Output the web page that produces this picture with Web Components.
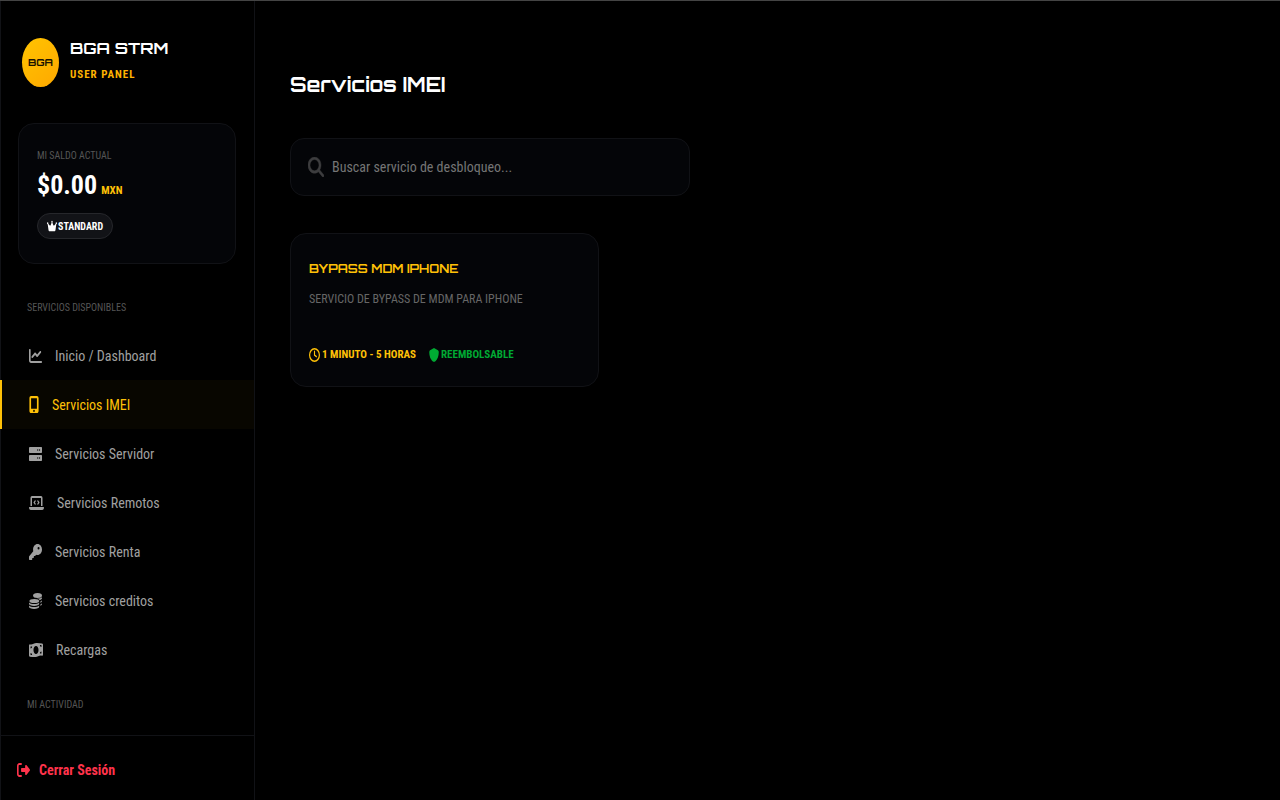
<!DOCTYPE html>
<html lang="es">
<head>
<meta charset="utf-8">
<meta name="viewport" content="width=device-width, initial-scale=1">
<title>BGA STRM - Servicios IMEI</title>
<style>
:root {
  --gold: #ffc107;
  --muted: #555;
  --text: #a0a0a0;
  --line: #111216;
  --panel: #040508;
  --body: "Roboto Condensed", Roboto, sans-serif;
  --display: Orbitron, Roboto, sans-serif;
}
html, body { margin: 0; background: #000; }
body { color: #fff; font-family: var(--body); }
</style>
</head>
<body>
<bga-app>
  <bga-sidebar slot="side">
    <bga-brand slot="brand"></bga-brand>
    <bga-balance slot="balance" amount="$0.00" currency="MXN" level="STANDARD"></bga-balance>
    <bga-section label="Servicios disponibles">
      <bga-nav-item icon="chart">Inicio / Dashboard</bga-nav-item>
      <bga-nav-item icon="mobile" active>Servicios IMEI</bga-nav-item>
      <bga-nav-item icon="server">Servicios Servidor</bga-nav-item>
      <bga-nav-item icon="laptop">Servicios Remotos</bga-nav-item>
      <bga-nav-item icon="key">Servicios Renta</bga-nav-item>
      <bga-nav-item icon="coins">Servicios creditos</bga-nav-item>
      <bga-nav-item icon="bill">Recargas</bga-nav-item>
    </bga-section>
    <bga-section label="Mi actividad"></bga-section>
    <bga-logout slot="foot">Cerrar Sesión</bga-logout>
  </bga-sidebar>
  <bga-title>Servicios IMEI</bga-title>
  <bga-search></bga-search>
  <bga-grid>
    <bga-service time="1 MINUTO - 5 HORAS" refund="REEMBOLSABLE">
      BYPASS MDM IPHONE
      <span slot="info">SERVICIO DE BYPASS DE MDM PARA IPHONE</span>
    </bga-service>
  </bga-grid>
</bga-app>
<script>
/* name: [viewBox width, drawn width, drawn height, markup] */
const ICONS = {
  chart: [512, 13, 16, '<path d="M64 64c0-17.7-14.3-32-32-32S0 46.3 0 64V400c0 44.2 35.8 80 80 80H480c17.7 0 32-14.3 32-32s-14.3-32-32-32H80c-8.8 0-16-7.2-16-16V64zm406.6 86.6c12.5-12.5 12.5-32.8 0-45.3s-32.8-12.5-45.3 0L320 210.7l-57.4-57.4c-12.5-12.5-32.8-12.5-45.3 0l-112 112c-12.5 12.5-12.5 32.8 0 45.3s32.8 12.5 45.3 0L240 221.3l57.4 57.4c12.5 12.5 32.8 12.5 45.3 0l128-128z"/>'],
  mobile: [384, 10, 17, '<path fill-rule="evenodd" d="M16 64C16 28.7 44.7 0 80 0H304c35.3 0 64 28.7 64 64V448c0 35.3-28.7 64-64 64H80c-35.3 0-64-28.7-64-64V64zM224 448a32 32 0 1 0 -64 0 32 32 0 1 0 64 0zM304 64H80V384H304V64z"/>'],
  server: [512, 13, 16, '<path fill-rule="evenodd" d="M32 32C14 32 0 46 0 64v128c0 18 14 32 32 32H480c18 0 32-14 32-32V64c0-18-14-32-32-32H32zm312 72a24 24 0 1 1 0 48 24 24 0 1 1 0-48zm48 24a24 24 0 1 1 48 0 24 24 0 1 1 -48 0zM32 288c-18 0-32 14-32 32v128c0 18 14 32 32 32H480c18 0 32-14 32-32V320c0-18-14-32-32-32H32zm312 72a24 24 0 1 1 0 48 24 24 0 1 1 0-48zm48 24a24 24 0 1 1 48 0 24 24 0 1 1 -48 0z"/>'],
  laptop: [640, 15, 16, '<path d="M64 96c0-35.3 28.7-64 64-64H512c35.3 0 64 28.7 64 64V352H512V96H128V352H64V96zM0 403.2C0 392.6 8.6 384 19.2 384H620.8c10.6 0 19.2 8.6 19.2 19.2c0 42.4-34.4 76.8-76.8 76.8H76.8C34.4 480 0 445.6 0 403.2zM281 209l-31 31 31 31c9.4 9.4 9.4 24.6 0 33.9s-24.6 9.4-33.9 0l-48-48c-9.4-9.4-9.4-24.6 0-33.9l48-48c9.4-9.4 24.6-9.4 33.9 0s9.4 24.6 0 33.9zM393 175l48 48c9.4 9.4 9.4 24.6 0 33.9l-48 48c-9.4 9.4-24.6 9.4-33.9 0s-9.4-24.6 0-33.9l31-31-31-31c-9.4-9.4-9.4-24.6 0-33.9s24.6-9.4 33.9 0z"/>'],
  key: [512, 13, 16, '<path fill-rule="evenodd" d="M336 352c97.2 0 176-78.8 176-176S433.2 0 336 0S160 78.8 160 176c0 18.7 2.9 36.8 8.3 53.7L7 391c-4.5 4.5-7 10.6-7 17v80c0 13.3 10.7 24 24 24h80c13.3 0 24-10.7 24-24V448h40c13.3 0 24-10.7 24-24V384h40c6.4 0 12.5-2.5 17-7l33.3-33.3c16.9 5.4 35 8.3 53.7 8.3zM376 96a40 40 0 1 1 0 80 40 40 0 1 1 0-80z"/>'],
  coins: [512, 13, 16, '<ellipse cx="336" cy="80" rx="176" ry="80"/><path d="M512 136v24c0 28-38 52-92 68-20-28-62-46-118-54 90 6 178-12 210-38zM512 232v24c0 24-26 44-66 58v-46c28-8 52-20 66-36zM512 328v24c0 24-26 44-66 58v-46c28-8 52-20 66-36z"/><ellipse cx="208" cy="256" rx="192" ry="64"/><path d="M0 300c34 36 118 52 200 52s166-16 200-52v44c0 42-90 72-200 72S0 386 0 344zM0 396c34 36 118 52 200 52s166-16 200-52v44c0 42-90 72-200 72S0 482 0 440z"/>'],
  bill: [576, 14, 16, '<path fill-rule="evenodd" d="M0 112c0-20 12-36 32-42 90 30 170-34 270-38 80-4 150 10 240 12 20 4 34 20 34 38v316c0 26-20 44-46 40-90-26-170 36-260 40-80 4-160-4-236-10-20-4-34-20-34-40zM288 128c-62 0-104 58-104 128s42 128 104 128 104-58 104-128-42-128-104-128zM64 352v64h64c0-36-28-64-64-64zM64 144v64c36 0 64-28 64-64zM512 304c-36 0-64 28-64 64h64zM448 96c0 36 28 64 64 64V96z"/>'],
  logout: [512, 13, 16, '<path d="M377.9 105.9L500.7 228.7c7.2 7.2 11.3 17.1 11.3 27.3s-4.1 20.1-11.3 27.3L377.9 406.1c-6.4 6.4-15 9.9-24 9.9c-18.7 0-33.9-15.2-33.9-33.9V320H192c-17.7 0-32-14.3-32-32V224c0-17.7 14.3-32 32-32H320V129.9c0-18.7 15.2-33.9 33.9-33.9c9 0 17.6 3.6 24 9.9zM160 96H96c-17.7 0-32 14.3-32 32V384c0 17.7 14.3 32 32 32h64c17.7 0 32 14.3 32 32s-14.3 32-32 32H96c-53 0-96-43-96-96V128C0 75 43 32 96 32h64c17.7 0 32 14.3 32 32s-14.3 32-32 32z"/>'],
  crown: [576, 10, 12, '<path d="M309 106c12-7 19-19 19-34a40 40 0 1 0-80 0c0 15 7 27 19 34l-57 114c-9 18-32 24-49 11L72 160c5-7 8-15 8-24a40 40 0 1 0-39 40l46 251c5 31 32 53 63 53h276c31 0 58-22 63-53l46-251a40 40 0 1 0-39-40c0 9 3 17 8 24l-89 71c-16 13-39 7-49-11z"/>'],
  search: [512, 16, 20, '<path fill-rule="evenodd" d="M416 208c0 45.9-14.9 88.3-40 122.7L502.6 457.4c12.5 12.5 12.5 32.8 0 45.3s-32.8 12.5-45.3 0L330.7 376c-34.4 25.2-76.8 40-122.7 40C93.1 416 0 322.9 0 208S93.1 0 208 0S416 93.1 416 208zM208 352a144 144 0 1 0 0-288 144 144 0 1 0 0 288z" stroke="currentColor" stroke-width="12"/>'],
  clock: [512, 11, 14, '<circle cx="256" cy="256" r="228" fill="none" stroke="currentColor" stroke-width="56"/><path d="M256 120v136l88 60" fill="none" stroke="currentColor" stroke-width="52" stroke-linecap="round"/>'],
  shield: [512, 10, 14, '<path d="M256 0l202 84c24 10 42 34 42 62-1 100-42 282-214 360-18 8-42 8-60 0C54 428 13 246 12 146c0-28 18-52 42-62z"/>']
};
const icon = name => {
  const [vb, w, h, body] = ICONS[name];
  return `<svg viewBox="0 0 ${vb} 512" width="${w}" height="${h}" preserveAspectRatio="none" fill="currentColor" aria-hidden="true">${body}</svg>`;
};
const define = (tag, render) => customElements.define(tag, class extends HTMLElement {
  constructor() { super(); this.attachShadow({ mode: 'open' }); }
  connectedCallback() {
    this.shadowRoot.innerHTML = `<style>*{box-sizing:border-box}:host{display:block;box-sizing:border-box}svg{display:block;flex:none}</style>` + render(this);
  }
});

define('bga-app', () => `
<style>
  :host { display: grid; grid-template-columns: 255px 1fr; height: 100vh; min-height: 600px; border-top: 1px solid #444; }
  main { padding: 64px 35px; min-width: 0; overflow: auto; }
</style>
<slot name="side"></slot><main><slot></slot></main>`);

define('bga-sidebar', () => `
<style>
  :host { display: flex; flex-direction: column; min-height: 0; border: solid var(--line); border-width: 0 1px; }
  nav { flex: 1; min-height: 0; overflow: hidden; margin-left: -1px; padding: 29px 0 0 1px; }
</style>
<slot name="brand"></slot><slot name="balance"></slot><nav><slot></slot></nav><slot name="foot"></slot>`);

define('bga-brand', () => `
<style>
  :host { display: flex; align-items: center; gap: 11px; padding: 34px 21px; }
  .logo { display: grid; place-items: center; width: 37px; height: 49px; border-radius: 50%; background: linear-gradient(135deg, #ffc400, #ffa800); color: #1a1200; font: 700 10px/16px var(--display); }
  .name { font: 700 16px/26px var(--display); }
  .sub { font: 700 11px/28px var(--body); letter-spacing: 1px; color: #ffb300; }
</style>
<div class="logo">BGA</div>
<div><div class="name">BGA STRM</div><div class="sub">USER PANEL</div></div>`);

define('bga-balance', el => `
<style>
  :host { margin: 0 18px 0 17px; padding: 23px 18px 24px; border: 1px solid var(--line); border-radius: 16px; background: var(--panel); }
  .label { font-size: 10px; line-height: 18px; color: var(--muted); }
  .amount { display: flex; align-items: baseline; gap: 4px; font-weight: 700; font-size: 26px; line-height: 40px; }
  small { font-size: 11px; line-height: 16px; color: var(--gold); }
  .level { display: flex; width: fit-content; align-items: center; gap: 1px; height: 26px; margin-top: 8px; padding: 0 9px; border: 1px solid #26272b; border-radius: 13px; background: #121317; font-weight: 700; font-size: 10px; }
</style>
<div class="label">MI SALDO ACTUAL</div>
<div class="amount">${el.getAttribute('amount')}<small>${el.getAttribute('currency')}</small></div>
<div class="level">${icon('crown')}<span>${el.getAttribute('level')}</span></div>`);

define('bga-section', el => `
<style>
  h2 { margin: 0; padding: 6px 26px 14px; font-weight: 400; font-size: 10px; line-height: 18px; color: var(--muted); text-transform: uppercase; }
  :host(:last-of-type) h2 { padding-top: 22px; }
</style>
<h2>${el.getAttribute('label')}</h2><slot></slot>`);

define('bga-nav-item', el => `
<style>
  a { display: flex; align-items: center; gap: 13px; height: 49px; padding-left: 28px; color: var(--text); font-size: 14px; text-decoration: none; }
  :host([active]) { margin-left: -1px; }
  :host([active]) a { padding-left: 27px; border-left: 2px solid var(--gold); background: #080600; color: var(--gold); }
</style>
<a href="#">${icon(el.getAttribute('icon'))}<span><slot></slot></span></a>`);

define('bga-logout', () => `
<style>
  :host { border-top: 1px solid var(--line); }
  a { display: flex; align-items: center; gap: 9px; height: 64px; padding: 4px 16px 0; color: #ff334b; font-weight: 700; font-size: 14px; text-decoration: none; }
</style>
<a href="#">${icon('logout')}<span><slot></slot></span></a>`);

define('bga-title', () => `
<style>h1 { margin: 0 0 33px; font: 700 20px/40px var(--display); }</style>
<h1><slot></slot></h1>`);

define('bga-search', () => `
<style>
  label { display: flex; align-items: center; gap: 8px; width: 100%; max-width: 400px; height: 58px; padding: 0 17px; border: 1px solid var(--line); border-radius: 14px; background: var(--panel); color: #3d3d3f; }
  input { flex: 1; min-width: 0; border: 0; outline: 0; padding: 0; background: none; color: #fff; font: 14px/20px var(--body); }
  input::placeholder { color: #757575; opacity: 1; }
</style>
<label>${icon('search')}<input type="text" placeholder="Buscar servicio de desbloqueo..." aria-label="Buscar servicio"></label>`);

define('bga-grid', () => `
<style>:host { display: grid; grid-template-columns: repeat(auto-fill, minmax(300px, 1fr)); gap: 14px; margin-top: 37px; }</style>
<slot></slot>`);

define('bga-service', el => `
<style>
  :host { padding: 22px 18px 21px; border: 1px solid var(--line); border-radius: 16px; background: var(--panel); }
  h3 { margin: 0; font: 700 12px/26px var(--display); color: var(--gold); }
  p { margin: 5px 0 34px; font-size: 12px; line-height: 24px; color: #666; }
  .meta { display: flex; gap: 13px; font-weight: 700; font-size: 11px; line-height: 20px; color: var(--gold); }
  .meta span { display: flex; align-items: center; gap: 2px; }
  .ok { color: #0a3; }
</style>
<h3><slot></slot></h3>
<p><slot name="info"></slot></p>
<div class="meta"><span>${icon('clock')}${el.getAttribute('time')}</span><span class="ok">${icon('shield')}${el.getAttribute('refund')}</span></div>`);
</script>
</body>
</html>
